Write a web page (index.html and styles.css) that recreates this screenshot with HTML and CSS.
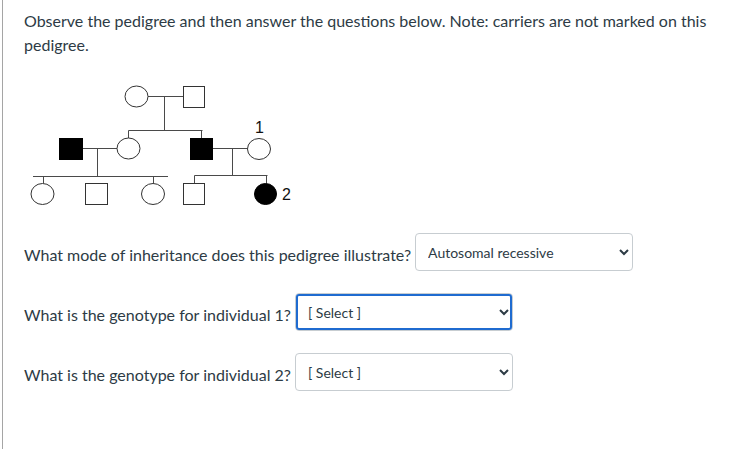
FILE: index.html
```html
<!DOCTYPE html>
<html lang="en">
<head>
<meta charset="utf-8">
<title>Pedigree question</title>
<link rel="stylesheet" href="styles.css">
</head>
<body>
<div class="question">
  <p class="intro">Observe the pedigree and then answer the questions below. Note: carriers are not marked on this pedigree.</p>

  <svg class="pedigree" width="280" height="132" viewBox="24 80 280 132" xmlns="http://www.w3.org/2000/svg">
    <g class="lines">
      <line x1="147.5" y1="96.5" x2="183.5" y2="96.5"/>
      <line x1="164.5" y1="96.5" x2="164.5" y2="130.5"/>
      <line x1="128.5" y1="130.5" x2="202.5" y2="130.5"/>
      <line x1="128.5" y1="130.5" x2="128.5" y2="138"/>
      <line x1="201.5" y1="130.5" x2="201.5" y2="138"/>

      <line x1="83" y1="148.5" x2="117.5" y2="148.5"/>
      <line x1="97.5" y1="148.5" x2="97.5" y2="176.5"/>
      <line x1="33" y1="176.5" x2="168" y2="176.5"/>
      <line x1="43.5" y1="176.5" x2="43.5" y2="183.5"/>
      <line x1="153.5" y1="176.5" x2="153.5" y2="183.5"/>

      <line x1="213" y1="148.5" x2="247.5" y2="148.5"/>
      <line x1="232.5" y1="148.5" x2="232.5" y2="175.5"/>
      <line x1="194.5" y1="175.5" x2="267.5" y2="175.5"/>
      <line x1="194.5" y1="175.5" x2="194.5" y2="183.5"/>
      <line x1="266.5" y1="175.5" x2="266.5" y2="183.5"/>
    </g>
    <g class="shapes">
      <ellipse cx="136.5" cy="96.5" rx="11.5" ry="10.5"/>
      <rect x="183.5" y="86.5" width="21" height="21"/>

      <rect class="affected" x="59.5" y="138.5" width="23" height="21"/>
      <ellipse cx="128.5" cy="148.5" rx="11.5" ry="10.5"/>
      <rect class="affected" x="190.5" y="138.5" width="22" height="21"/>
      <ellipse cx="259" cy="149" rx="11.5" ry="10.5"/>

      <ellipse cx="42.5" cy="194" rx="11.5" ry="10.5"/>
      <rect x="85.5" y="183.5" width="22" height="21"/>
      <ellipse cx="153" cy="194" rx="11.5" ry="10.5"/>
      <rect x="183.5" y="183.5" width="21" height="21"/>
      <ellipse class="affected" cx="265.5" cy="194" rx="11" ry="10.5"/>
    </g>
    <text class="label" x="255" y="133">1</text>
    <text class="label" x="282" y="200">2</text>
  </svg>

  <div class="answers">
    <div class="row">
      <span class="prompt">What mode of inheritance does this pedigree illustrate?</span>
      <select class="choice">
        <option>Autosomal recessive</option>
      </select>
    </div>
    <div class="row">
      <span class="prompt">What is the genotype for individual 1?</span>
      <select class="choice focused">
        <option>[ Select ]</option>
      </select>
    </div>
    <div class="row">
      <span class="prompt">What is the genotype for individual 2?</span>
      <select class="choice">
        <option>[ Select ]</option>
      </select>
    </div>
  </div>
</div>
</body>
</html>
```

FILE: styles.css
```css
html, body {
  margin: 0;
  padding: 0;
  background: #ffffff;
}

body {
  font-family: "Lato", "Liberation Sans", sans-serif;
  color: #2d3b45;
}

.question {
  margin-left: 2px;
  border-left: 1px solid #a5a5a5;
  padding: 9px 0 0 21px;
  height: 440px;
}

.intro {
  margin: 0;
  font-size: 16px;
  line-height: 24px;
  max-width: 700px;
}

.pedigree {
  display: block;
  margin-top: 23px;
}

.lines line {
  stroke: #4a4a4a;
  stroke-width: 1;
}

.shapes ellipse,
.shapes rect {
  fill: #ffffff;
  stroke: #333333;
  stroke-width: 1;
}

.shapes .affected {
  fill: #000000;
  stroke: #000000;
}

.label {
  font-family: "Liberation Sans", Arial, sans-serif;
  font-size: 16px;
  fill: #111111;
}

.answers {
  margin-top: 21px;
  display: flex;
  flex-direction: column;
  gap: 22px;
}

.row {
  display: flex;
  align-items: center;
  gap: 4px;
}

.prompt {
  font-size: 16px;
  line-height: 24px;
  padding-top: 5px;
}

.choice {
  width: 218px;
  height: 38px;
  box-sizing: border-box;
  border: 1px solid #c7cdd1;
  border-radius: 4px;
  background: #ffffff;
  color: #2d3b45;
  font-family: "Lato", "Liberation Sans", sans-serif;
  font-size: 14px;
  padding: 0 2px 0 8px;
}

.focused {
  outline: 2px solid #1f6bd0;
  outline-offset: -3px;
}
```
